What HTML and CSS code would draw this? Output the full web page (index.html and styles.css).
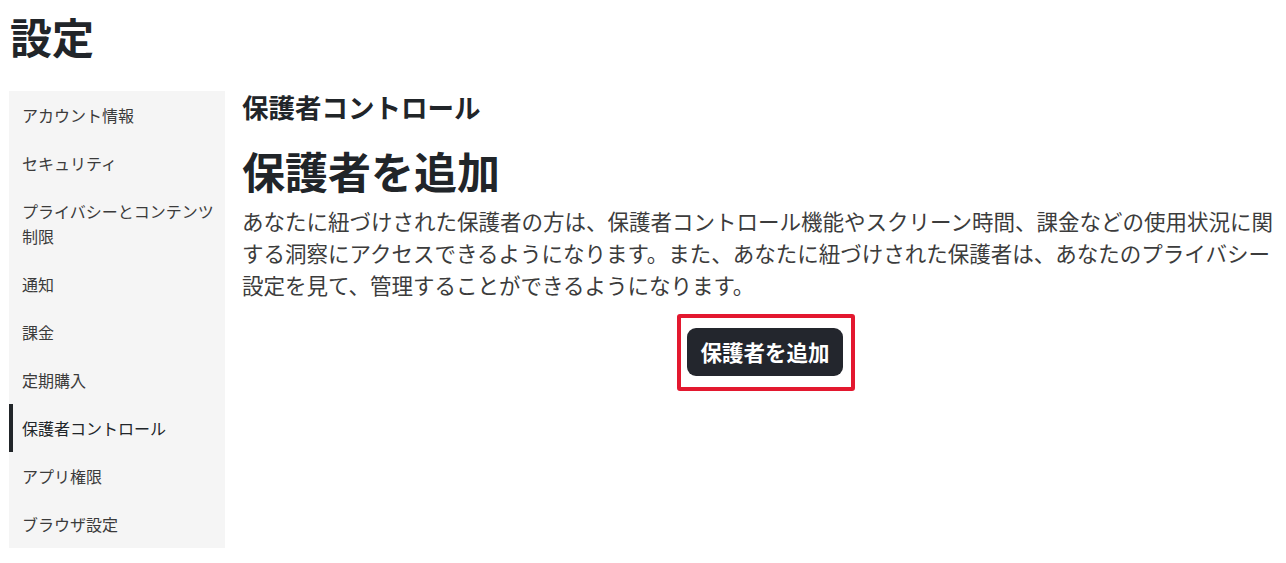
FILE: index.html
```html
<!DOCTYPE html>
<html lang="ja">
<head>
  <meta charset="UTF-8" />
  <meta name="viewport" content="width=device-width, initial-scale=1" />
  <title>設定</title>
  <link rel="stylesheet" href="styles.css">
</head>
<body>

<h1 class="page-title">設定</h1>

<div class="settings">
  <nav class="side-nav">
    <a class="nav-item" href="#">アカウント情報</a>
    <a class="nav-item" href="#">セキュリティ</a>
    <a class="nav-item" href="#">プライバシーとコンテンツ制限</a>
    <a class="nav-item" href="#">通知</a>
    <a class="nav-item" href="#">課金</a>
    <a class="nav-item" href="#">定期購入</a>
    <a class="nav-item active" href="#">保護者コントロール</a>
    <a class="nav-item" href="#">アプリ権限</a>
    <a class="nav-item" href="#">ブラウザ設定</a>
  </nav>

  <main class="content">
    <h2 class="section-title">保護者コントロール</h2>
    <h3 class="block-title">保護者を追加</h3>
    <p class="desc">あなたに紐づけされた保護者の方は、保護者コントロール機能やスクリーン時間、課金などの使用状況に関する洞察にアクセスできるようになります。また、あなたに紐づけされた保護者は、あなたのプライバシー設定を見て、管理することができるようになります。</p>
    <div class="actions">
      <div class="highlight">
        <button class="btn-add">保護者を追加</button>
      </div>
    </div>
  </main>
</div>

</body>
</html>
```

FILE: styles.css
```css
body {
  margin: 0;
  padding: 11px 8px 0 9px;
  font-family: "Noto Sans CJK JP", "Noto Sans", sans-serif;
  color: #212529;
  background: #fff;
}
.page-title {
  margin: 0 0 30px 1px;
  font-size: 42px;
  line-height: 50px;
  font-weight: 700;
}
.settings {
  display: flex;
  align-items: flex-start;
  gap: 17px;
}
.side-nav {
  width: 216px;
  flex-shrink: 0;
  background: #f5f5f5;
  display: flex;
  flex-direction: column;
}
.nav-item {
  display: block;
  padding: 12px 10px 11px 13px;
  font-size: 16px;
  line-height: 25px;
  color: #3b3b3b;
  text-decoration: none;
}
.nav-item.active {
  color: #212529;
  padding-left: 9px;
  border-left: 4px solid #212529;
}
.content {
  flex: 1;
  min-width: 0;
}
.section-title {
  margin: 0;
  font-size: 26.5px;
  line-height: 32px;
  font-weight: 700;
}
.block-title {
  margin: 22px 0 10px;
  font-size: 43px;
  line-height: 50px;
  font-weight: 700;
}
.desc {
  margin: 0;
  font-size: 21.5px;
  line-height: 32px;
  color: #3c3c3c;
}
.actions {
  display: flex;
  justify-content: center;
  margin-top: 13px;
  padding-left: 12px;
}
.highlight {
  border: 4px solid #e3182f;
  border-radius: 3px;
  padding: 10px 8px 11px 6px;
}
.btn-add {
  display: block;
  font-family: inherit;
  font-size: 21.5px;
  line-height: 32px;
  font-weight: 700;
  color: #fff;
  background: #23262d;
  border: none;
  border-radius: 9px;
  padding: 8px 13px;
  cursor: pointer;
}
```
